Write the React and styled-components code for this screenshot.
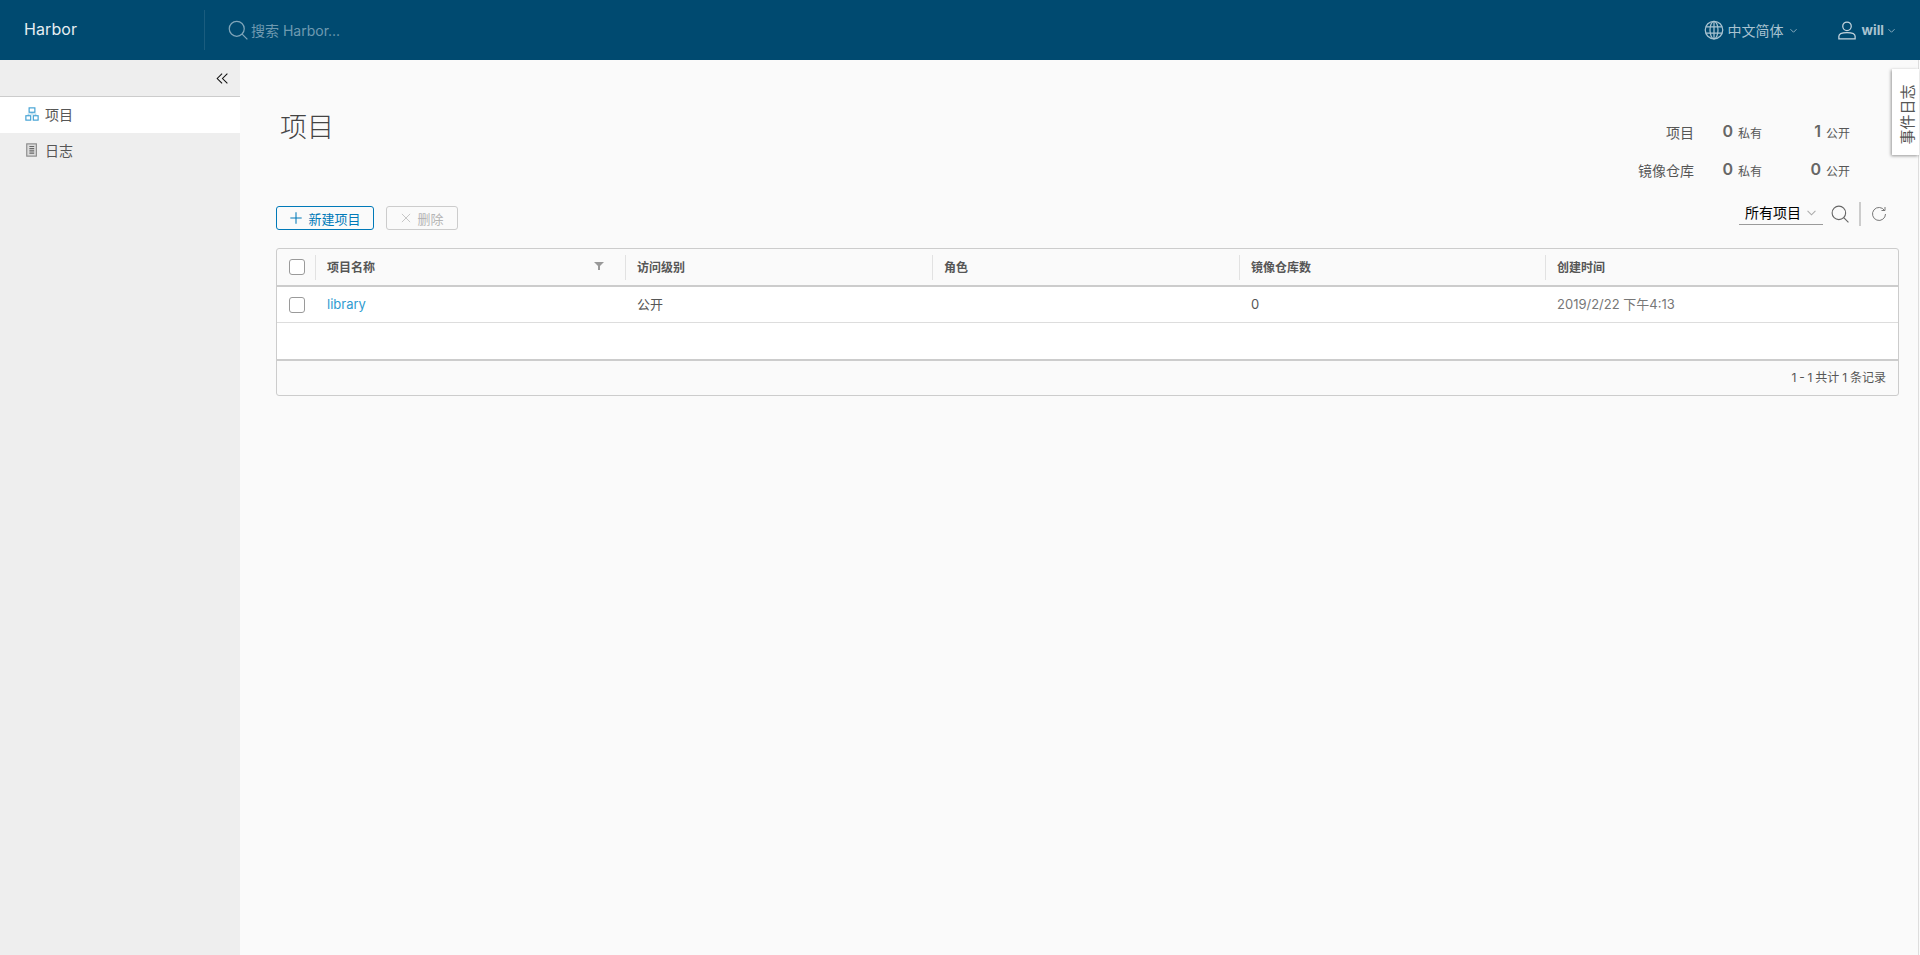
import React from "react";
import styled, { createGlobalStyle } from "styled-components";

const Global = createGlobalStyle`
  html, body { margin: 0; padding: 0; height: 100%; background: #fafafa; }
  body { font-family: Inter, "Noto Sans CJK SC", "Noto Sans", sans-serif; color: #565656; overflow: hidden; }
  * { box-sizing: border-box; }
`;

const Page = styled.div`height: 955px; display: flex; flex-direction: column; position: relative;`;
const Header = styled.header`
  height: 60px; background: #004a70; display: flex; align-items: center; flex: none;
`;
const Brand = styled.div`
  width: 205px; height: 40px; padding: 0 0 2px 24px; display: flex; align-items: center;
  color: #e6eef2; font-size: 16px; letter-spacing: .1px; border-right: 1px solid #1a5c7e; flex: none;
`;
const Search = styled.div`
  display: flex; align-items: center; gap: 3px; margin-left: 23px; color: #6f9ab0; font-size: 14px; flex: 1;
`;
const HeadItem = styled.div`
  display: flex; align-items: center; color: #a9c3d1; font-size: 14px; margin-right: ${p => p.$mr}px;
`;
const HeadIcon = styled.span`display: flex; margin-right: ${p => p.$g}px;`;
const HeadChev = styled.span`display: flex; margin-left: ${p => p.$g}px;`;
const Bold = styled.span`font-weight: 700; font-size: 13.5px;`;
const Body = styled.div`flex: 1; display: flex; min-height: 0;`;
const Side = styled.nav`width: 240px; background: #eeeeee; flex: none;`;
const Collapse = styled.div`
  height: 37px; display: flex; align-items: center; justify-content: flex-end; padding-right: 11px;
  border-bottom: 1px solid #ccc;
`;
const NavRow = styled.div`
  height: 36px; display: flex; align-items: center; gap: 6px; padding: 0 0 2px 25px; font-size: 14px; color: #565656;
  background: ${p => (p.$active ? "#fff" : "transparent")};
`;
const Main = styled.main`
  flex: 1; padding: 0 19px 0 36px; min-width: 0; margin-right: 1px; border-right: 1px solid #ddd;
`;
const Top = styled.div`display: flex; justify-content: space-between; height: 142px;`;
const Title = styled.h1`
  margin: 48px 0 0 4px; font-size: 27px; line-height: 36px; font-weight: 200; color: #444;
  font-family: "Noto Sans CJK SC", sans-serif;
`;
const Stats = styled.div`
  display: grid; grid-template-columns: 70px 68px 88px; grid-auto-rows: 38px; margin: 53px 49px 0 0; align-items: center;
`;
const StatLabel = styled.div`text-align: right; font-size: 14px; color: #565656;`;
const StatVal = styled.div`
  display: flex; align-items: center; justify-content: flex-end; gap: 5px; font-size: 12px; color: #565656;
  b { font-size: 16px; line-height: 18px; font-weight: 600; color: #666; margin-bottom: 3px; }
`;
const Bar = styled.div`display: flex; align-items: flex-start; height: 46px;`;
const Btn = styled.button`
  height: 24px; display: flex; align-items: center; justify-content: center; gap: 5px; padding: 0; background: transparent;
  font: inherit; font-size: 13px; border-radius: 3px; margin: 4px 12px 0 0; width: ${p => p.$w}px;
  border: 1px solid ${p => (p.$off ? "#ccc" : "#0079b8")};
  color: ${p => (p.$off ? "#b5b5b5" : "#0079b8")};
`;
const Filler = styled.div`flex: 1;`;
const Tools = styled.div`display: flex; align-items: center; height: 24px; padding-right: 12px;`;
const Select = styled.div`
  width: 84px; height: 23px; display: flex; align-items: center; justify-content: space-between; padding: 0 7px 2px 6px;
  border-bottom: 1px solid #9a9a9a; font-size: 14px; color: #000; margin: 0 8px 1px 0;
`;
const Divider = styled.div`width: 2px; height: 24px; background: #ccc; margin: 0 10px 0 10px;`;
const Table = styled.div`
  border: 1px solid #ccc; border-radius: 3px; display: grid;
  grid-template-columns: 38px 310px 307px 307px 306px 1fr;
`;
const HeadCell = styled.div`
  height: 38px; border-bottom: 2px solid #ccc; display: flex; align-items: center; justify-content: space-between; padding: 0 21px 2px 12px;
  font-size: 12px; font-weight: 700; color: #565656; position: relative;
  &::before {
    content: ""; position: absolute; left: 0; top: 6px; height: 25px; width: 1px; background: #e2e2e2;
  }
`;
const Cell = styled.div`
  height: 36px; background: #fff; border-bottom: 1px solid #ddd; display: flex; align-items: center; padding: 0 0 2px 12px;
  font-size: 13px; color: ${p => p.$c || "#565656"};
`;
const BoxCell = styled.div`
  height: ${p => p.$h}px; background: ${p => p.$bg}; display: flex; align-items: center; justify-content: center;
  padding-left: 1px; border-bottom: ${p => p.$b};
`;
const Check = styled.span`width: 16px; height: 16px; border: 1px solid #9a9a9a; border-radius: 3px; background: #fff;`;
const Empty = styled.div`grid-column: 1 / -1; height: 38px; background: #fff; border-bottom: 2px solid #ccc;`;
const Foot = styled.div`
  grid-column: 1 / -1; height: 34px; display: flex; align-items: center; justify-content: flex-end; padding: 0 12px 3px 0;
  font-size: 12px; color: #565656; word-spacing: -.5px;
`;
const Tab = styled.div`
  position: absolute; right: 1px; top: 69px; width: 27px; height: 86px; background: #fff; padding-top: 5px;
  box-shadow: -1px 1px 3px rgba(0,0,0,.4); display: flex; align-items: center; justify-content: center;
`;
const TabText = styled.span`transform: rotate(-90deg); white-space: nowrap; font-size: 15px; color: #565656;`;

const I = ({ s = 16, c = "currentColor", w = 1, children }) => (
  <svg width={s} height={s} viewBox="0 0 16 16" fill="none" stroke={c} strokeWidth={w}>{children}</svg>
);
const SearchIcon = ({ s, c }) => <I s={s} c={c}><circle cx="7" cy="7" r="6" /><path d="M11.3 11.3 15.5 15.5" /></I>;
const Chev = ({ s = 7, c }) => <I s={s} c={c} w={1.8}><path d="M1 5l7 7 7-7" /></I>;

const cols = ["访问级别", "角色", "镜像仓库数", "创建时间"];

export default function App() {
  return (
    <Page>
      <Global />
      <Header>
        <Brand>Harbor</Brand>
        <Search><SearchIcon s={20} c="#7fa5b9" />搜索 Harbor...</Search>
        <HeadItem $mr={40}>
          <HeadIcon $g={4}>
            <I s={20} c="#a9c3d1"><circle cx="8" cy="8" r="7" /><ellipse cx="8" cy="8" rx="3.2" ry="7" /><path d="M8 1v14M1.500 5.500h13M1.500 10.500h13" /></I>
          </HeadIcon>
          中文简体
          <HeadChev $g={6}><Chev c="#a9c3d1" /></HeadChev>
        </HeadItem>
        <HeadItem $mr={25}>
          <HeadIcon $g={5}>
            <I s={20} c="#c5d5de"><circle cx="8" cy="5" r="3.400" /><path d="M1.500 15v-2c0-2 2-3 6.500-3s6.500 1 6.500 3v2z" /></I>
          </HeadIcon>
          <Bold>will</Bold>
          <HeadChev $g={4}><Chev c="#a9c3d1" /></HeadChev>
        </HeadItem>
      </Header>
      <Body>
        <Side>
          <Collapse>
            <I s={13} c="#111" w={1.3}><path d="M7.500 2 1.500 8l6 6M14 2 8 8l6 6" /></I>
          </Collapse>
          <NavRow $active>
            <I s={14} c="#3d9fd3" w={1.300}><rect x="4.700" y="1" width="6.600" height="5" /><rect x="1" y="10" width="5.500" height="5" /><rect x="9.500" y="10" width="5.500" height="5" /><path d="M8 6v2M3.700 10V8h8.600v2" opacity=".45" /></I>
            项目
          </NavRow>
          <NavRow>
            <I s={14} c="#8a8a8a" w={1.300}><rect x="2" y="1" width="11" height="14" fill="#dcdcdc" /><path d="M5 4h5.500M5 6.500h5.500M5 9h5.500M5 11.500h5.500" stroke="#666" /></I>
            日志
          </NavRow>
        </Side>
        <Main>
          <Top>
            <Title>项目</Title>
            <Stats>
              <StatLabel>项目</StatLabel><StatVal><b>0</b>私有</StatVal><StatVal><b>1</b>公开</StatVal>
              <StatLabel>镜像仓库</StatLabel><StatVal><b>0</b>私有</StatVal><StatVal><b>0</b>公开</StatVal>
            </Stats>
          </Top>
          <Bar>
            <Btn $w={98}><I s={14} w={1.2}><path d="M8 1.500v13M1.500 8h13" /></I>新建项目</Btn>
            <Btn $w={72} $off><I s={12}><path d="M2.500 2.500l11 11M13.500 2.500l-11 11" /></I>删除</Btn>
            <Filler />
            <Tools>
              <Select>所有项目<Chev s={9} c="#aaa" /></Select>
              <SearchIcon s={18} c="#666" />
              <Divider />
              <I s={16} c="#777"><path d="M13.500 4.500A6.500 6.500 0 1 0 14.500 8M10.500 4.500h3.500V1" /></I>
            </Tools>
          </Bar>
          <Table>
            <BoxCell $h={38} $bg="transparent" $b="2px solid #ccc"><Check /></BoxCell>
            <HeadCell>项目名称<svg width="10" height="8" viewBox="0 0 10 8"><path d="M0 0h10L6 4v4H4V4z" fill="#999" /></svg></HeadCell>
            {cols.map(c => <HeadCell key={c}>{c}</HeadCell>)}
            <BoxCell $h={36} $bg="#fff" $b="1px solid #ddd"><Check /></BoxCell>
            <Cell $c="#2f9bd0">library</Cell>
            <Cell>公开</Cell>
            <Cell />
            <Cell>0</Cell>
            <Cell $c="#777">2019/2/22 下午4:13</Cell>
            <Empty />
            <Foot>1 - 1 共计 1 条记录</Foot>
          </Table>
        </Main>
      </Body>
      <Tab><TabText>事件日志</TabText></Tab>
    </Page>
  );
}
